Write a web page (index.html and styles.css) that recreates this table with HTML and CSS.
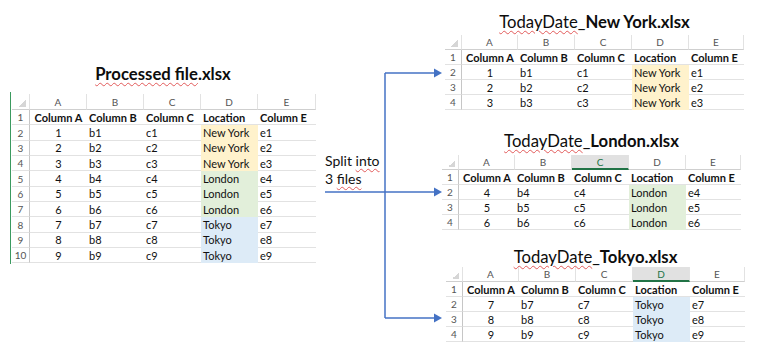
FILE: index.html
```html
<!DOCTYPE html>
<html lang="en">
<head>
<meta charset="utf-8">
<title>Split workbook</title>
<link rel="stylesheet" href="styles.css">
</head>
<body>
<div class="page">
  <section class="src">
    <h1 class="title title-src"><span class="sq">Processed file</span>.xlsx</h1>
    <div class="frame">
      <div class="sheet sheet-src">
        <div class="c corner"></div><div class="c h">A</div><div class="c h">B</div><div class="c h">C</div><div class="c h">D</div><div class="c h">E</div>
        <div class="c r">1</div><div class="c b n">Column A</div><div class="c b">Column B</div><div class="c b">Column C</div><div class="c b">Location</div><div class="c b">Column E</div>
        <div class="c r">2</div><div class="c n">1</div><div class="c">b1</div><div class="c">c1</div><div class="c ny">New York</div><div class="c">e1</div>
        <div class="c r">3</div><div class="c n">2</div><div class="c">b2</div><div class="c">c2</div><div class="c ny">New York</div><div class="c">e2</div>
        <div class="c r">4</div><div class="c n">3</div><div class="c">b3</div><div class="c">c3</div><div class="c ny">New York</div><div class="c">e3</div>
        <div class="c r">5</div><div class="c n">4</div><div class="c">b4</div><div class="c">c4</div><div class="c ld">London</div><div class="c">e4</div>
        <div class="c r">6</div><div class="c n">5</div><div class="c">b5</div><div class="c">c5</div><div class="c ld">London</div><div class="c">e5</div>
        <div class="c r">7</div><div class="c n">6</div><div class="c">b6</div><div class="c">c6</div><div class="c ld">London</div><div class="c">e6</div>
        <div class="c r">8</div><div class="c n">7</div><div class="c">b7</div><div class="c">c7</div><div class="c tk">Tokyo</div><div class="c">e7</div>
        <div class="c r">9</div><div class="c n">8</div><div class="c">b8</div><div class="c">c8</div><div class="c tk">Tokyo</div><div class="c">e8</div>
        <div class="c r">10</div><div class="c n">9</div><div class="c">b9</div><div class="c">c9</div><div class="c tk">Tokyo</div><div class="c">e9</div>
      </div>
    </div>
  </section>

  <div class="mid">
    <p class="split">Split <span class="sq">into</span><br>3 <span class="sq">files</span></p>
  </div>

  <section class="outs">
    <div class="out out-ny">
      <h2 class="title title-out"><span class="sq">TodayDate</span>_<b>New York.xlsx</b></h2>
      <div class="sheet sheet-out">
        <div class="c corner"></div><div class="c h">A</div><div class="c h">B</div><div class="c h">C</div><div class="c h">D</div><div class="c h">E</div>
        <div class="c r">1</div><div class="c b n">Column A</div><div class="c b">Column B</div><div class="c b">Column C</div><div class="c b">Location</div><div class="c b">Column E</div>
        <div class="c r">2</div><div class="c n">1</div><div class="c">b1</div><div class="c">c1</div><div class="c ny">New York</div><div class="c">e1</div>
        <div class="c r">3</div><div class="c n">2</div><div class="c">b2</div><div class="c">c2</div><div class="c ny">New York</div><div class="c">e2</div>
        <div class="c r">4</div><div class="c n">3</div><div class="c">b3</div><div class="c">c3</div><div class="c ny">New York</div><div class="c">e3</div>
      </div>
    </div>

    <div class="out out-ld">
      <h2 class="title title-out"><span class="sq">TodayDate</span>_<b>London.xlsx</b></h2>
      <div class="sheet sheet-out">
        <div class="c corner"></div><div class="c h">A</div><div class="c h">B</div><div class="c h sel">C</div><div class="c h">D</div><div class="c h">E</div>
        <div class="c r">1</div><div class="c b n">Column A</div><div class="c b">Column B</div><div class="c b">Column C</div><div class="c b">Location</div><div class="c b">Column E</div>
        <div class="c r">2</div><div class="c n">4</div><div class="c">b4</div><div class="c">c4</div><div class="c ld">London</div><div class="c">e4</div>
        <div class="c r">3</div><div class="c n">5</div><div class="c">b5</div><div class="c">c5</div><div class="c ld">London</div><div class="c">e5</div>
        <div class="c r">4</div><div class="c n">6</div><div class="c">b6</div><div class="c">c6</div><div class="c ld">London</div><div class="c">e6</div>
      </div>
    </div>

    <div class="out out-tk">
      <h2 class="title title-out"><span class="sq">TodayDate</span>_<b>Tokyo.xlsx</b></h2>
      <div class="sheet sheet-out">
        <div class="c corner"></div><div class="c h">A</div><div class="c h">B</div><div class="c h">C</div><div class="c h sel">D</div><div class="c h">E</div>
        <div class="c r">1</div><div class="c b n">Column A</div><div class="c b">Column B</div><div class="c b">Column C</div><div class="c b">Location</div><div class="c b">Column E</div>
        <div class="c r">2</div><div class="c n">7</div><div class="c">b7</div><div class="c">c7</div><div class="c tk">Tokyo</div><div class="c">e7</div>
        <div class="c r">3</div><div class="c n">8</div><div class="c">b8</div><div class="c">c8</div><div class="c tk">Tokyo</div><div class="c">e8</div>
        <div class="c r">4</div><div class="c n">9</div><div class="c">b9</div><div class="c">c9</div><div class="c tk">Tokyo</div><div class="c">e9</div>
      </div>
    </div>
  </section>

  <svg class="arrows" width="769" height="356" viewBox="0 0 769 356" aria-hidden="true">
    <g fill="none" stroke="#4472c4" stroke-width="1.5">
      <path d="M325 192H385"/>
      <path d="M385 73V318"/>
      <path d="M385 73H436"/>
      <path d="M385 192H436"/>
      <path d="M385 318H436"/>
    </g>
    <g fill="#4472c4">
      <path d="M434 68.5L442 73L434 77.5Z"/>
      <path d="M434 187.5L442 192L434 196.5Z"/>
      <path d="M434 313.5L442 318L434 322.5Z"/>
    </g>
  </svg>
</div>
</body>
</html>
```

FILE: styles.css
```css
* { box-sizing: border-box; }

html, body {
  margin: 0;
  padding: 0;
  background: #ffffff;
}

body {
  font-family: Lato, "Open Sans", "Liberation Sans", sans-serif;
  color: #111;
}

.page {
  position: relative;
  width: 769px;
  height: 356px;
  display: flex;
  align-items: flex-start;
  overflow: hidden;
}

/* titles */
.title {
  margin: 0;
  font-size: 16.7px;
  line-height: 20px;
  text-align: center;
  color: #0d0d0d;
  white-space: nowrap;
}
.title-src { font-weight: 700; }
.title-out { font-weight: 400; }
.title-out b { font-weight: 700; }

.sq {
  text-decoration: underline wavy #e25a5a;
  text-decoration-thickness: 1px;
  text-underline-offset: 2px;
}

/* source block */
.src {
  margin-left: 10px;
  width: 306px;
  padding-top: 64px;
  flex: none;
}
.src .title { margin-bottom: 8px; }

.frame {
  border-left: 1px solid #3b9a5f;
  padding: 2px 0 0 1px;
  height: 172px;
}

/* middle text */
.mid {
  flex: none;
  width: 124px;
  padding: 152px 0 0 9px;
}
.split {
  margin: 0;
  font-size: 14px;
  line-height: 17.5px;
  color: #111;
}

/* output blocks */
.outs {
  flex: none;
  display: flex;
  flex-direction: column;
  align-items: flex-start;
}
.out-ny { margin: 12px 0 0 5px; }
.out-ny .title { margin-bottom: 3px; }
.out-ld { margin: 21px 0 0 2px; }
.out-ld .title { margin-bottom: 4px; }
.out-tk { margin: 17px 0 0 6px; }
.out-tk .title { margin-bottom: 0; }

/* sheet grid */
.sheet {
  display: grid;
  font-size: 11px;
}
.sheet-src {
  grid-template-columns: 18px repeat(4, 57px) 58px;
  grid-template-rows: 16px;
  grid-auto-rows: 15.35px;
}
.sheet-out {
  grid-template-columns: 17px 56px 57px 57px 57px 55px;
  grid-template-rows: 15px;
  grid-auto-rows: 15px;
}

.c {
  display: flex;
  align-items: center;
  padding-left: 2px;
  border-bottom: 1px solid #e2e2e2;
  white-space: nowrap;
  overflow: hidden;
  color: #111;
}

.corner {
  border-right: 1px solid #e2e2e2;
  border-bottom: 1px solid #cfcfcf;
  background-image: linear-gradient(to bottom right, transparent 50%, #d6d6d6 50%);
  background-size: 7px 7px;
  background-position: right 3px bottom 2px;
  background-repeat: no-repeat;
}

.h {
  justify-content: center;
  padding-left: 0;
  color: #555;
  font-size: 10px;
  border-right: 1px solid #e2e2e2;
  border-bottom: 1px solid #cfcfcf;
}
.h.sel {
  background: #e1e1e1;
  color: #217346;
  border-bottom: 2px solid #217346;
}

.r {
  justify-content: center;
  padding-left: 0;
  color: #555;
  font-size: 10px;
  border-right: 1px solid #c6c6c6;
}

.n { justify-content: center; padding-left: 0; }
.b { font-weight: 700; }

.ny { background: #fff2cc; border-bottom-color: #fff2cc; }
.ld { background: #e2efda; border-bottom-color: #e2efda; }
.tk { background: #ddebf7; border-bottom-color: #ddebf7; }

/* connector arrows lie over the page */
.arrows {
  position: absolute;
  left: 0;
  top: 0;
  pointer-events: none;
}
```
